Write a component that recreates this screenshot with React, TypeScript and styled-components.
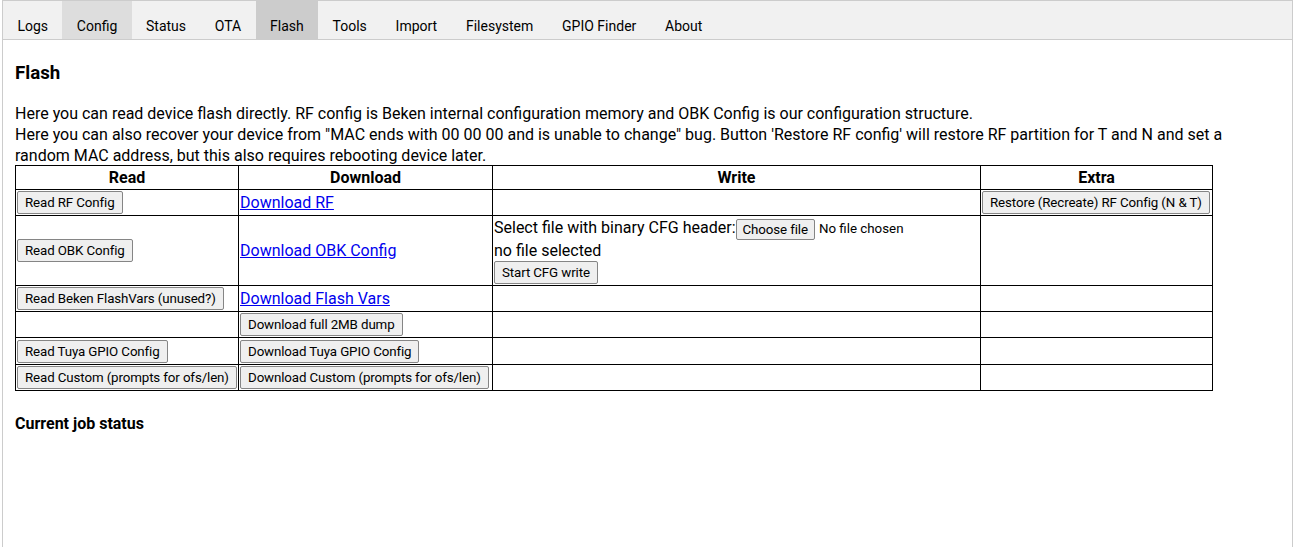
import React from "react";
import styled, { createGlobalStyle } from "styled-components";

const Global = createGlobalStyle`
  html, body { margin: 0; padding: 0; background: #fff; }
  body { font-family: Roboto, "Liberation Sans", Arial, sans-serif; font-size: 16px; color: #000; }
`;

const Root = styled.div`
  min-height: 547px;
  box-sizing: border-box;
  padding: 0 1px 0 2px;
  display: flex;
  flex-direction: column;
`;

const TabBar = styled.div`
  display: flex;
  height: 38px;
  border: 1px solid #ccc;
  background: #f1f1f1;
  overflow: hidden;
`;

const Tab = styled.button<{ $state?: "active" | "hover" }>`
  border: none;
  outline: none;
  margin: 0;
  height: 38px;
  padding: 11px 14.4px 0;
  line-height: 24px;
  font-family: Roboto, "Liberation Sans", Arial, sans-serif;
  font-size: 14px;
  color: #000;
  cursor: pointer;
  background: ${(p) => (p.$state === "active" ? "#ccc" : p.$state === "hover" ? "#ddd" : "inherit")};
`;

const Content = styled.div`
  flex: 1;
  border: 1px solid #ccc;
  border-top: none;
  border-bottom: none;
  padding: 0 12px;
`;

const Title = styled.h3`
  margin: 21px 0 17px;
  font-size: 18.7px;
  line-height: 25px;
  font-weight: 700;
`;

const Intro = styled.p`
  margin: 0 0 -1px;
  line-height: 21px;
`;

const Table = styled.table`
  border-collapse: collapse;
  border: 1px solid #000;
  width: 1198px;
  table-layout: fixed;
`;

const Th = styled.th`
  border: 1px solid #000;
  padding: 1px;
  font-weight: 700;
  line-height: 21px;
  text-align: center;
`;

const Td = styled.td`
  border: 1px solid #000;
  padding: 1px;
  line-height: 21px;
  vertical-align: middle;
`;

const Btn = styled.button`
  display: inline-block;
  vertical-align: middle;
  box-sizing: border-box;
  height: 23px;
  padding: 0 7px;
  margin: 0;
  font-family: Roboto, "Liberation Sans", Arial, sans-serif;
  font-size: 13.33px;
  letter-spacing: -0.12px;
  line-height: 21px;
  color: #000;
  background: #efefef;
  border: 1px solid #858585;
  border-radius: 2px;
  white-space: nowrap;
`;

const FileBtn = styled(Btn)`
  height: 21px;
  line-height: 19px;
  padding: 0 6px;
  margin-right: 4px;
`;

const FileNote = styled.span`
  font-size: 13.33px;
  vertical-align: middle;
`;

const Link = styled.a`
  color: #0000ee;
  text-decoration: underline;
`;

const JobTitle = styled.h4`
  margin: 22px 0 0;
  font-size: 16px;
  line-height: 21px;
  font-weight: 700;
`;

const tabs = ["Logs", "Config", "Status", "OTA", "Flash", "Tools", "Import", "Filesystem", "GPIO Finder", "About"];

export default function App() {
  return (
    <Root>
      <Global />
      <TabBar>
        {tabs.map((t) => (
          <Tab key={t} $state={t === "Flash" ? "active" : t === "Config" ? "hover" : undefined}>
            {t}
          </Tab>
        ))}
      </TabBar>
      <Content>
        <Title>Flash</Title>
        <Intro>
          Here you can read device flash directly. RF config is Beken internal configuration memory and OBK Config is our configuration structure.
          <br />
          Here you can also recover your device from "MAC ends with 00 00 00 and is unable to change" bug. Button 'Restore RF config' will restore RF partition for T and N and set a
          <br />
          random MAC address, but this also requires rebooting device later.
        </Intro>
        <Table>
          <colgroup>
            <col style={{ width: 223 }} />
            <col style={{ width: 254 }} />
            <col style={{ width: 488 }} />
            <col style={{ width: 232 }} />
          </colgroup>
          <thead>
            <tr>
              <Th>Read</Th>
              <Th>Download</Th>
              <Th>Write</Th>
              <Th>Extra</Th>
            </tr>
          </thead>
          <tbody>
            <tr>
              <Td><Btn>Read RF Config</Btn></Td>
              <Td><Link href="#">Download RF</Link></Td>
              <Td />
              <Td><Btn>Restore (Recreate) RF Config (N &amp; T)</Btn></Td>
            </tr>
            <tr>
              <Td><Btn>Read OBK Config</Btn></Td>
              <Td><Link href="#">Download OBK Config</Link></Td>
              <Td>
                Select file with binary CFG header:<FileBtn>Choose file</FileBtn>
                <FileNote>No file chosen</FileNote>
                <br />
                no file selected
                <br />
                <Btn>Start CFG write</Btn>
              </Td>
              <Td />
            </tr>
            <tr>
              <Td><Btn>Read Beken FlashVars (unused?)</Btn></Td>
              <Td><Link href="#">Download Flash Vars</Link></Td>
              <Td />
              <Td />
            </tr>
            <tr>
              <Td />
              <Td><Btn>Download full 2MB dump</Btn></Td>
              <Td />
              <Td />
            </tr>
            <tr>
              <Td><Btn>Read Tuya GPIO Config</Btn></Td>
              <Td><Btn>Download Tuya GPIO Config</Btn></Td>
              <Td />
              <Td />
            </tr>
            <tr>
              <Td><Btn>Read Custom (prompts for ofs/len)</Btn></Td>
              <Td><Btn>Download Custom (prompts for ofs/len)</Btn></Td>
              <Td />
              <Td />
            </tr>
          </tbody>
        </Table>
        <JobTitle>Current job status</JobTitle>
      </Content>
    </Root>
  );
}
